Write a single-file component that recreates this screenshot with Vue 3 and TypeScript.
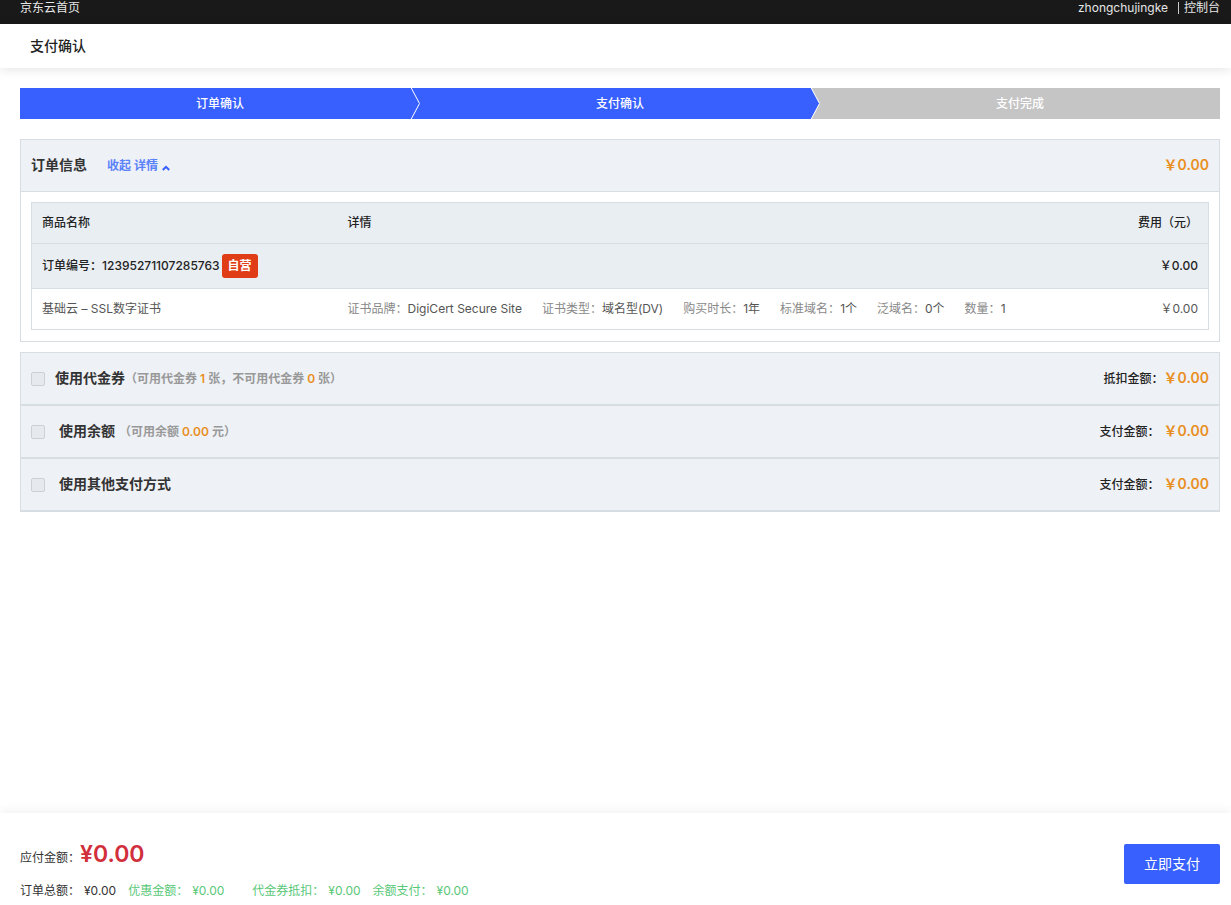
<script setup lang="ts">
import { ref } from 'vue'

interface Step {
  label: string
  done: boolean
}

interface Spec {
  label: string
  value: string
}

const steps: Step[] = [
  { label: '订单确认', done: true },
  { label: '支付确认', done: true },
  { label: '支付完成', done: false },
]

const specs: Spec[] = [
  { label: '证书品牌', value: 'DigiCert Secure Site' },
  { label: '证书类型', value: '域名型(DV)' },
  { label: '购买时长', value: '1年' },
  { label: '标准域名', value: '1个' },
  { label: '泛域名', value: '0个' },
  { label: '数量', value: '1' },
]

const expanded = ref(true)
</script>

<template>
  <div class="page">
    <nav class="topbar">
      <a href="#" class="topbar-link">京东云首页</a>
      <div class="topbar-user">
        <a href="#" class="topbar-link">zhongchujingke</a>
        <span class="divider"></span>
        <a href="#" class="topbar-link">控制台</a>
      </div>
    </nav>
    <header class="title-bar">
      <h1 class="title">支付确认</h1>
    </header>

    <main class="content">
      <ol class="steps">
        <li v-for="(step, i) in steps" :key="step.label" class="step" :class="{ done: step.done }">
          {{ step.label }}
          <svg
            v-if="i < steps.length - 1"
            class="step-arrow"
            :class="{ 'next-done': steps[i + 1].done }"
            viewBox="0 0 10 31"
            preserveAspectRatio="none"
            aria-hidden="true"
          >
            <path class="arrow-fill" d="M1 0H10V31H1L9.5 15.5Z" />
            <path class="arrow-line" d="M1 -0.5L9.5 15.5L1 31.5" />
          </svg>
        </li>
      </ol>

      <section class="order">
        <div class="order-head">
          <h2 class="heading">订单信息</h2>
          <button type="button" class="toggle" :aria-expanded="expanded" @click="expanded = !expanded">
            {{ expanded ? '收起' : '展开' }} 详情
            <svg class="caret" :class="{ closed: !expanded }" viewBox="0 0 8 6" aria-hidden="true">
              <path d="M0.8 5L4 1.8L7.2 5" />
            </svg>
          </button>
          <strong class="price">￥0.00</strong>
        </div>
        <div v-if="expanded" class="order-body">
          <table class="goods">
            <thead>
              <tr class="goods-head">
                <th class="col-name" scope="col">商品名称</th>
                <th scope="col">详情</th>
                <th class="col-fee" scope="col">费用（元）</th>
              </tr>
            </thead>
            <tbody>
              <tr class="goods-order">
                <td colspan="2">
                  <div class="order-no">
                    <span>订单编号：12395271107285763</span>
                    <span class="badge">自营</span>
                  </div>
                </td>
                <td class="col-fee">￥0.00</td>
              </tr>
              <tr class="goods-item">
                <td>基础云 – SSL数字证书</td>
                <td>
                  <div class="specs">
                    <span v-for="spec in specs" :key="spec.label">
                      <span class="spec-label">{{ spec.label }}：</span>{{ spec.value }}
                    </span>
                  </div>
                </td>
                <td class="col-fee">￥0.00</td>
              </tr>
            </tbody>
          </table>
        </div>
      </section>

      <section class="methods">
        <div class="method voucher">
          <input id="use-voucher" class="tick" type="checkbox" disabled />
          <label class="heading" for="use-voucher">使用代金券</label>
          <span class="hint">（可用代金券 <b>1</b> 张，不可用代金券 <b>0</b> 张）</span>
          <span class="method-label">抵扣金额：</span>
          <strong class="price">￥0.00</strong>
        </div>
        <div class="method">
          <input id="use-balance" class="tick" type="checkbox" disabled />
          <label class="heading" for="use-balance">使用余额</label>
          <span class="hint">（可用余额 <b>0.00</b> 元）</span>
          <span class="method-label">支付金额：</span>
          <strong class="price">￥0.00</strong>
        </div>
        <div class="method">
          <input id="use-other" class="tick" type="checkbox" disabled />
          <label class="heading" for="use-other">使用其他支付方式</label>
          <span class="method-label">支付金额：</span>
          <strong class="price">￥0.00</strong>
        </div>
      </section>
    </main>

    <footer class="footer">
      <div class="totals">
        <div class="due">
          <span>应付金额：</span>
          <strong class="due-amount">¥0.00</strong>
        </div>
        <div class="breakdown">
          <span class="sum"><span>订单总额：</span><span>¥0.00</span></span>
          <span class="sum saving"><span>优惠金额：</span><span>¥0.00</span></span>
          <span class="sum saving apart"><span>代金券抵扣：</span><span>¥0.00</span></span>
          <span class="sum saving"><span>余额支付：</span><span>¥0.00</span></span>
        </div>
      </div>
      <button type="button" class="pay">立即支付</button>
    </footer>
  </div>
</template>

<style>
body {
  margin: 0;
  background: #fff;
}
</style>

<style scoped>
.page {
  display: flex;
  flex-direction: column;
  min-height: 100vh;
  font: 12px/20px Inter, 'Noto Sans CJK SC', sans-serif;
  color: #333;
}

.topbar {
  display: flex;
  justify-content: space-between;
  align-items: flex-start;
  box-sizing: border-box;
  height: 24px;
  padding: 0 11px 0 20px;
  background: #191919;
  line-height: 16px;
}

.topbar-link {
  color: #e6e6e6;
  text-decoration: none;
}

.topbar-user {
  display: flex;
  align-items: center;
}

.divider {
  width: 1px;
  height: 12px;
  margin: 0 5px 0 10px;
  background: #ccc;
}

.title-bar {
  padding: 12px 30px;
  box-shadow: 0 2px 10px rgba(0, 0, 0, 0.1);
}

.title {
  margin: 0;
  font-size: 14px;
  font-weight: 500;
  line-height: 20px;
  color: #222;
}

.content {
  flex: 1;
  padding: 20px 11px 20px 20px;
}

.steps {
  display: flex;
  margin: 0 0 20px;
  padding: 0;
  list-style: none;
}

.step {
  position: relative;
  flex: 1;
  background: #c5c5c5;
  color: #fff;
  font-weight: 500;
  line-height: 31px;
  text-align: center;
}

.step.done {
  background: #3860ff;
}

.step-arrow {
  position: absolute;
  top: 0;
  right: 0;
  width: 10px;
  height: 100%;
}

.arrow-fill {
  fill: #c5c5c5;
}

.next-done .arrow-fill {
  fill: #3860ff;
}

.arrow-line {
  fill: none;
  stroke: #fff;
  stroke-width: 1;
}

.order {
  border: 1px solid #d7dee3;
}

.order-head {
  display: flex;
  align-items: center;
  height: 51px;
  padding: 0 10px;
  border-bottom: 1px solid #d7dee3;
  background: #eef1f6;
}

.heading {
  margin: 0;
  padding-bottom: 2px;
  font-size: 14px;
  font-weight: 600;
  color: #333;
}

.toggle {
  display: flex;
  align-items: center;
  gap: 4px;
  margin-left: 20px;
  padding: 0;
  border: 0;
  background: none;
  font: inherit;
  font-weight: 600;
  color: #5a82fa;
  cursor: pointer;
}

.caret {
  width: 8px;
  height: 6px;
  margin-top: 4px;
}

.caret.closed {
  transform: rotate(180deg);
}

.caret path {
  fill: none;
  stroke: #3860ff;
  stroke-width: 2;
}

.price {
  padding-bottom: 2px;
  font-size: 14px;
  font-weight: 600;
  color: #e98f1f;
}

.order-head .price {
  margin-left: auto;
}

.order-body {
  padding: 10px 10px 11px;
}

.goods {
  width: 100%;
  border-collapse: collapse;
  border: 1px solid #d7dee3;
}

.goods th,
.goods td {
  padding: 0 10px;
  text-align: left;
}

.goods th {
  font-weight: 500;
}

.goods tr {
  height: 41px;
  border-bottom: 1px solid #d7dee3;
}

.goods-head,
.goods-order {
  background: #e9eef2;
  font-weight: 500;
  color: #222;
}

.goods .goods-order {
  height: 45px;
}

.goods-item {
  color: #555;
}

.col-name {
  width: 26%;
  box-sizing: border-box;
}

.goods .col-fee {
  text-align: right;
  white-space: nowrap;
}

.order-no {
  display: flex;
  align-items: center;
  gap: 2px;
}

.badge {
  padding: 0 6px;
  border-radius: 3px;
  background: #e03d16;
  color: #fff;
  font-weight: 700;
  line-height: 24px;
}

.specs {
  display: flex;
  flex-wrap: wrap;
  column-gap: 20px;
}

.spec-label {
  color: #888;
}

.methods {
  margin-top: 10px;
  border: 1px solid #d7dee3;
  border-bottom: 0;
}

.method {
  display: flex;
  align-items: center;
  gap: 4px;
  height: 51px;
  padding: 0 10px;
  border-bottom: 2px solid #d7dee3;
  background: #eef1f6;
}

.method.voucher {
  gap: 0;
}

.tick {
  appearance: none;
  box-sizing: border-box;
  width: 14px;
  height: 14px;
  margin: 0 10px 0 0;
  border: 1px solid #cdd1d5;
  border-radius: 2px;
  background: #e6eaee;
}

.hint {
  font-weight: 600;
  color: #999;
}

.hint b {
  font-weight: 600;
  color: #e98f1f;
}

.method-label {
  margin-left: auto;
  font-weight: 500;
  color: #222;
}

.footer {
  display: flex;
  justify-content: space-between;
  align-items: flex-start;
  padding: 23px 11px 4px 20px;
  background: #fff;
  box-shadow: 0 -2px 10px rgba(0, 0, 0, 0.06);
}

.due {
  display: flex;
  align-items: baseline;
  height: 40px;
  line-height: 36px;
}

.due-amount {
  font-size: 23px;
  font-weight: 600;
  color: #d22f3c;
}

.breakdown {
  display: flex;
  gap: 12px;
  margin-top: 5px;
}

.sum {
  display: flex;
  gap: 4px;
}

.saving {
  color: #58c878;
}

.apart {
  margin-left: 16px;
}

.pay {
  height: 40px;
  margin-top: 8px;
  padding: 0 20px;
  border: 0;
  border-radius: 2px;
  background: #3860ff;
  color: #fff;
  font: inherit;
  font-size: 14px;
  cursor: pointer;
}
</style>
